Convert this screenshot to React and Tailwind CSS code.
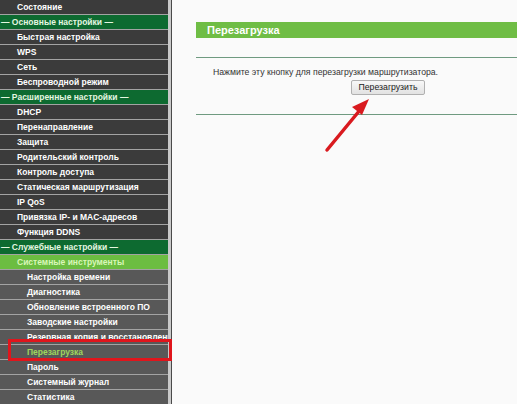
import React from 'react';

// sidebar rows, top to bottom
const menu = [
  { label: 'Состояние', type: 'item' },
  { label: '— Основные настройки —', type: 'head' },
  { label: 'Быстрая настройка', type: 'item' },
  { label: 'WPS', type: 'item' },
  { label: 'Сеть', type: 'item' },
  { label: 'Беспроводной режим', type: 'item' },
  { label: '— Расширенные настройки —', type: 'head' },
  { label: 'DHCP', type: 'item' },
  { label: 'Перенаправление', type: 'item' },
  { label: 'Защита', type: 'item' },
  { label: 'Родительский контроль', type: 'item' },
  { label: 'Контроль доступа', type: 'item' },
  { label: 'Статическая маршрутизация', type: 'item' },
  { label: 'IP QoS', type: 'item' },
  { label: 'Привязка IP- и MAC-адресов', type: 'item' },
  { label: 'Функция DDNS', type: 'item' },
  { label: '— Служебные настройки —', type: 'head' },
  { label: 'Системные инструменты', type: 'open' },
  { label: 'Настройка времени', type: 'sub' },
  { label: 'Диагностика', type: 'sub' },
  { label: 'Обновление встроенного ПО', type: 'sub' },
  { label: 'Заводские настройки', type: 'sub' },
  { label: 'Резервная копия и восстановление', type: 'sub' },
  { label: 'Перезагрузка', type: 'active' },
  { label: 'Пароль', type: 'sub' },
  { label: 'Системный журнал', type: 'sub' },
  { label: 'Статистика', type: 'sub' },
];

const rowStyles = {
  item: 'bg-[#3b3b3b] text-white pl-[17px]',
  head: 'bg-[#0d6a30] text-[#e4f7e0] pl-[1px]',
  open: 'bg-[#6cbd41] text-[#d9f7b8] pl-[17px]',
  sub: 'bg-[#585858] text-white pl-[27px]',
  active: 'bg-[#585858] text-[#9fd65c] pl-[27px]',
};

function MenuRow({ label, type }) {
  return (
    <div className={`h-[15px] shrink-0 border-b border-[#a3a3a3] overflow-hidden whitespace-nowrap text-[8.5px] leading-[14px] font-bold ${rowStyles[type]}`}>
      {label}
    </div>
  );
}

export default function App() {
  return (
    <div className="relative w-[517px] h-[404px] flex overflow-hidden bg-[#fafafa]" style={{ fontFamily: '"Liberation Sans", Arial, sans-serif' }}>
      {/* Sidebar */}
      <div className="w-[168px] shrink-0 flex flex-col bg-[#3b3b3b]">
        {menu.map((m) => (
          <MenuRow key={m.label} {...m} />
        ))}
      </div>
      <div className="w-[3px] shrink-0 bg-[#c9c9c9]" />
      <div className="w-[1px] shrink-0 bg-[#4a4a4a]" />

      {/* Content */}
      <div className="flex-1 pl-[24px] pt-[22px] flex flex-col">
        <div className="h-[16px] bg-[#6fbd45] text-white font-bold text-[11px] leading-[16px] pl-[11px]">
          Перезагрузка
        </div>
        <div className="mt-[19px] border-t border-[#6f9a80]" />
        <div className="pl-[17px] pt-[8px] text-[8.7px] leading-[12px] text-[#333]">
          Нажмите эту кнопку для перезагрузки маршрутизатора.
        </div>
        <div className="flex pl-[155px] pt-[2px]">
          <button className="w-[74px] h-[15px] border border-[#b0b0b0] rounded-[2px] bg-gradient-to-b from-[#f8f8f8] to-[#e2e2e2] text-[8.7px] leading-[13px] text-[#222]">
            Перезагрузить
          </button>
        </div>
        <div className="mt-[19px] border-t border-[#6f9a80]" />
      </div>

      {/* Annotation: red highlight box */}
      <div className="absolute left-[8px] top-[339px] w-[164px] h-[22px] border-[3px] border-[#e0151c]" />

      {/* Annotation: red arrow */}
      <svg className="absolute left-0 top-0" width="517" height="404" viewBox="0 0 517 404">
        <line x1="327" y1="150" x2="360" y2="110" stroke="#d91a1f" strokeWidth="3.5" strokeLinecap="round" />
        <polygon points="369,99 352,107 362,115" fill="#d91a1f" />
      </svg>
    </div>
  );
}
